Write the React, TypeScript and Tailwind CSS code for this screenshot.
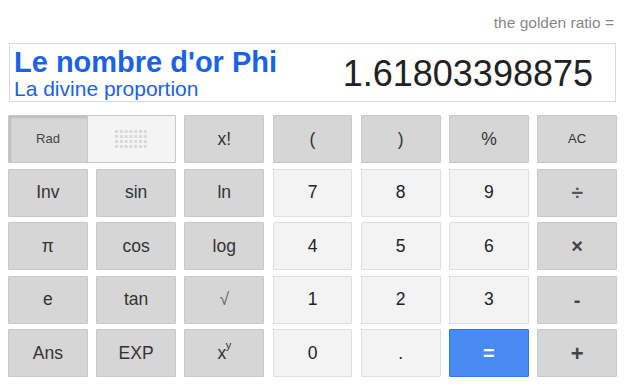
import React from "react";

type Kind = "g" | "l" | "b";

function Btn({ kind, children, small }: { kind: Kind; children: React.ReactNode; small?: boolean }) {
  const base =
    "h-[48px] flex items-center justify-center rounded-[1px] border select-none";
  const cls =
    kind === "g"
      ? "bg-[#d6d6d6] border-[#c8c8c8] text-[#333]"
      : kind === "l"
      ? "bg-[#f3f3f3] border-[#dedede] text-[#222]"
      : "bg-[#4a8af4] border-[#3079ed] text-white";
  return (
    <div className={`${base} ${cls} ${small ? "text-[13px]" : "text-[17.5px]"}`}>{children}</div>
  );
}

function Dots() {
  const cells = [];
  for (let r = 0; r < 4; r++) {
    for (let c = 0; c < 7; c++) {
      cells.push(<rect key={`${r}-${c}`} x={c * 4.8} y={r * 5} width={3} height={3} fill="#d9d9d9" />);
    }
  }
  return (
    <svg width="32" height="18" viewBox="0 0 32 18">
      {cells}
    </svg>
  );
}

export default function App() {
  return (
    <div className="w-[625px] h-[387px] bg-white font-['Liberation_Sans',Arial,sans-serif] overflow-hidden">
      <div className="mt-[14px] h-[18px] leading-[18px] text-right pr-[11px] text-[15.5px] text-[#878787]">
        the golden ratio =
      </div>
      <div className="mt-[11px] mx-[9px] h-[59px] border border-[#d9d9d9] flex justify-between">
        <div className="pl-[4px] pt-[4px] text-[#1a62e8]">
          <div className="text-[29px] leading-[29px] font-bold">Le nombre d'or Phi</div>
          <div className="mt-[1px] text-[21px] leading-[21px]">La divine proportion</div>
        </div>
        <div className="pr-[22px] flex items-center text-[36px] leading-none text-[#222] pt-[2px]">
          1.61803398875
        </div>
      </div>
      <div className="mt-[13px] px-[8px] grid grid-cols-7 gap-x-[8.5px] gap-y-[5.5px]">
        <div className="col-span-2 h-[48px] flex border border-[#c8c8c8] rounded-[1px] overflow-hidden">
          <div className="w-[79px] bg-[#d6d6d6] shadow-[inset_2px_2px_2px_rgba(0,0,0,0.12)] border-r border-[#c8c8c8] flex items-center justify-center text-[13px] text-[#444]">
            Rad
          </div>
          <div className="flex-1 bg-[#f4f4f4] flex items-center justify-center">
            <Dots />
          </div>
        </div>
        <Btn kind="g">x!</Btn>
        <Btn kind="g">(</Btn>
        <Btn kind="g">)</Btn>
        <Btn kind="g">%</Btn>
        <Btn kind="g" small>AC</Btn>

        <Btn kind="g">Inv</Btn>
        <Btn kind="g">sin</Btn>
        <Btn kind="g">ln</Btn>
        <Btn kind="l">7</Btn>
        <Btn kind="l">8</Btn>
        <Btn kind="l">9</Btn>
        <Btn kind="g"><span className="text-[21px] font-bold text-[#555]">÷</span></Btn>

        <Btn kind="g">π</Btn>
        <Btn kind="g">cos</Btn>
        <Btn kind="g">log</Btn>
        <Btn kind="l">4</Btn>
        <Btn kind="l">5</Btn>
        <Btn kind="l">6</Btn>
        <Btn kind="g"><span className="text-[20px] font-bold text-[#444]">×</span></Btn>

        <Btn kind="g">e</Btn>
        <Btn kind="g">tan</Btn>
        <Btn kind="g"><span className="text-[#666]">√</span></Btn>
        <Btn kind="l">1</Btn>
        <Btn kind="l">2</Btn>
        <Btn kind="l">3</Btn>
        <Btn kind="g"><span className="text-[20px] font-bold text-[#444]">-</span></Btn>

        <Btn kind="g">Ans</Btn>
        <Btn kind="g">EXP</Btn>
        <Btn kind="g">
          <span className="relative pr-[5px]">
            x<span className="absolute right-0 -top-[3px] text-[11px]">y</span>
          </span>
        </Btn>
        <Btn kind="l">0</Btn>
        <Btn kind="l">.</Btn>
        <Btn kind="b"><span className="font-bold text-[20px]">=</span></Btn>
        <Btn kind="g"><span className="text-[22px] font-bold text-[#444]">+</span></Btn>
      </div>
    </div>
  );
}
